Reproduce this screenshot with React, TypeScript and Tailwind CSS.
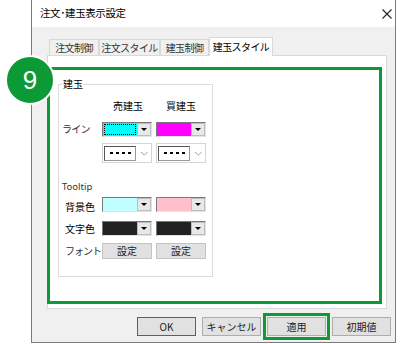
import React from "react";

const jp = { fontFamily: '"Noto Sans CJK JP", "Noto Sans", sans-serif' };

function ColorCombo({ color, focused }: { color: string; focused?: boolean }) {
  return (
    <div className="w-[50px] h-[15px] flex bg-white border border-t-[#7a7a7a] border-l-[#7a7a7a] border-r-[#e3e3e3] border-b-[#e3e3e3]">
      <div className="flex-1 p-px" style={{ backgroundColor: color }}>
        {focused && <div className="w-full h-full border border-dotted border-black" />}
      </div>
      <div className="w-[14px] h-full bg-[#e8e8e8] border border-[#bdbdbd] flex items-center justify-center">
        <div className="w-0 h-0 border-l-[3px] border-r-[3px] border-t-[3px] border-l-transparent border-r-transparent border-t-black" />
      </div>
    </div>
  );
}

function LineCombo() {
  return (
    <div className="w-[50px] h-[20px] bg-white border border-[#d4d4d4] flex items-center pl-px">
      <div className="w-[33px] h-[15px] border border-t-[#555] border-l-[#555] border-r-[#999] border-b-[#999] flex items-center justify-center gap-[3px]">
        <div className="w-[3px] h-[2px] bg-black" />
        <div className="w-[3px] h-[2px] bg-black" />
        <div className="w-[3px] h-[2px] bg-black" />
        <div className="w-[3px] h-[2px] bg-black" />
      </div>
      <svg width="14" height="20" viewBox="0 0 14 20" className="ml-px">
        <path d="M4 9 L7.5 12 L11 9" fill="none" stroke="#a0a0a0" strokeWidth="1" />
      </svg>
    </div>
  );
}

function SmallButton({ label }: { label: string }) {
  return (
    <div className="w-[50px] h-[16px] bg-[#e1e1e1] border border-[#c4c4c4] flex items-center justify-center text-[10px] leading-none text-[#222]">
      {label}
    </div>
  );
}

function Tab({ label, w, active }: { label: string; w: string; active?: boolean }) {
  if (active) {
    return (
      <div className={`${w} h-[19px] -mb-px relative z-10 bg-white border border-b-0 border-[#d9d9d9] flex items-start justify-center pt-[2px] text-[10px] leading-[13px] tracking-[-0.6px]`}>
        {label}
      </div>
    );
  }
  return (
    <div className={`${w} h-[16px] bg-[#f0f0f0] border border-b-0 border-[#d9d9d9] flex items-center justify-center text-[10px] leading-none tracking-[-0.6px] text-[#333]`}>
      {label}
    </div>
  );
}

function DlgButton({ label, primary, marked }: { label: string; primary?: boolean; marked?: boolean }) {
  return (
    <div
      className={`w-[59px] h-[19px] bg-[#e1e1e1] border flex items-center justify-center text-[10px] leading-none text-[#222] ${
        primary ? "border-[#0078d7]" : "border-[#adadad]"
      } ${marked ? "outline-[3px] outline-solid outline-[#0c9a36] outline-offset-[1px]" : ""}`}
    >
      {label}
    </div>
  );
}

export default function App() {
  return (
    <div className="w-[400px] h-[344px] bg-white relative overflow-hidden text-black" style={jp}>
      <div className="ml-[31px] w-[365px] h-[343px] bg-[#f0f0f0] border-l border-r border-b border-[#7b7b7b] flex flex-col">
        {/* title bar */}
        <div className="h-[27px] bg-white flex items-center justify-between pl-[8px] pr-[3px]">
          <span className="text-[10.5px] leading-none tracking-[-0.4px]">注文･建玉表示設定</span>
          <svg width="10" height="10" viewBox="0 0 10 10">
            <path d="M0.5 0.5 L9.5 9.5 M9.5 0.5 L0.5 9.5" stroke="#222" strokeWidth="1.1" />
          </svg>
        </div>

        <div className="pt-[10px] pl-[15px]">
          <div className="flex items-end h-[18px] pl-[2px]">
            <Tab label="注文制御" w="w-[50px]" />
            <Tab label="注文スタイル" w="w-[61px]" />
            <Tab label="建玉制御" w="w-[49px]" />
            <Tab label="建玉スタイル" w="w-[64px]" active />
          </div>

          <div className="w-[340px] h-[254px] bg-white border border-[#d9d9d9] flex flex-col">
            <div className="-ml-px mt-[11px] w-[335px] h-[237px] border-[3px] border-[#0c9a36]">
              <div className="ml-[8px] mt-[14px] w-[155px] h-[193px] border border-[#dcdcdc] relative text-[10px]">
                <span className="absolute left-[3px] top-[-8px] bg-white px-px leading-[14px]">建玉</span>

                <div className="flex mt-[15px] pl-[43px] gap-[4px] leading-[12px]">
                  <div className="w-[50px] text-center pl-[2px]">売建玉</div>
                  <div className="w-[50px] text-center">買建玉</div>
                </div>

                <div className="flex mt-[10px] items-start">
                  <div className="w-[43px] pl-[3px] leading-[12px] pt-px text-[#333] tracking-[-0.8px]">ライン</div>
                  <div className="flex gap-[4px]">
                    <ColorCombo color="#00ffff" focused />
                    <ColorCombo color="#ff00ff" />
                  </div>
                </div>

                <div className="flex mt-[6px] pl-[43px] gap-[4px]">
                  <LineCombo />
                  <LineCombo />
                </div>

                <div className="mt-[18px] pl-[3px] leading-[12px] text-[#333]" style={{ fontFamily: '"Noto Sans", sans-serif', fontSize: "9.5px" }}>
                  Tooltip
                </div>

                <div className="flex mt-[4px] items-start">
                  <div className="w-[43px] pl-[6px] leading-[12px] pt-[4px]">背景色</div>
                  <div className="flex gap-[4px]">
                    <ColorCombo color="#c0ffff" />
                    <ColorCombo color="#ffc0cb" />
                  </div>
                </div>

                <div className="flex mt-[8px] items-start">
                  <div className="w-[43px] pl-[6px] leading-[12px] pt-[2px]">文字色</div>
                  <div className="flex gap-[4px]">
                    <ColorCombo color="#222222" />
                    <ColorCombo color="#222222" />
                  </div>
                </div>

                <div className="flex mt-[7px] items-start">
                  <div className="w-[43px] pl-[6px] leading-[12px] pt-[2px] text-[#333] tracking-[-1px]">フォント</div>
                  <div className="flex gap-[4px]">
                    <SmallButton label="設定" />
                    <SmallButton label="設定" />
                  </div>
                </div>
              </div>
            </div>
          </div>
        </div>

        <div className="flex justify-end gap-[6px] mt-[8px] pr-[4px]">
          <DlgButton label="OK" primary />
          <DlgButton label="キャンセル" />
          <DlgButton label="適用" marked />
          <DlgButton label="初期値" />
        </div>
      </div>

      {/* step badge */}
      <div className="absolute left-[5px] top-[55px] w-[50px] h-[50px] rounded-full bg-[#0c9a36] border-2 border-white flex items-center justify-center">
        <span className="text-white text-[26px] leading-none" style={{ fontFamily: '"Liberation Sans", Arial, sans-serif' }}>
          9
        </span>
      </div>
    </div>
  );
}
